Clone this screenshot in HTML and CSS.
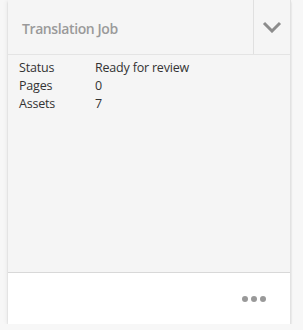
FILE: index.html
```html
<!DOCTYPE html>
<html lang="en">
<head>
  <meta charset="UTF-8">
  <title>Translation Job</title>
  <link rel="stylesheet" href="styles.css">
</head>
<body>
<div class="card">
  <div class="card-head">
    <div class="title">Translation Job</div>
    <div class="toggle">
      <svg width="20" height="12" viewBox="0 0 20 12"><path d="M2 2 L10 10 L18 2" fill="none" stroke="#8c8c8c" stroke-width="3"/></svg>
    </div>
  </div>
  <div class="card-body">
    <div class="row"><span class="label">Status</span><span>Ready for review</span></div>
    <div class="row"><span class="label">Pages</span><span>0</span></div>
    <div class="row"><span class="label">Assets</span><span>7</span></div>
  </div>
  <div class="card-foot">
    <span class="dot"></span><span class="dot"></span><span class="dot"></span>
  </div>
</div>
</body>
</html>
```

FILE: styles.css
```css
html, body {
    margin: 0;
    padding: 0;
    background: #f7f7f7;
    font-family: "Open Sans", "Liberation Sans", sans-serif;
}

.card {
    width: 282px;
    height: 324px;
    margin-left: 8px;
    background: #f5f5f5;
    border-right: 1px solid #e2e2e2;
    box-shadow: 0 2px 2px rgba(0, 0, 0, 0.15), -2px 0 4px rgba(0, 0, 0, 0.04);

    display: flex;
    flex-direction: column;
}

.card-head {
    height: 54px;
    border-bottom: 1px solid #e4e4e4;

    display: flex;
    flex-direction: row;
}

.title {
    flex: 1;
    padding: 19px 0 0 14px;
    font-size: 14px;
    letter-spacing: -0.4px;
    font-weight: 600;
    color: #9a9a9a;
}

.toggle {
    width: 36px;
    border-left: 1px solid #e0e0e0;

    display: flex;
    align-items: center;
    justify-content: center;
}

.card-body {
    flex: 1;
    padding: 4px 0 0 11px;
    font-size: 12.5px;
    letter-spacing: -0.2px;
    color: #333;
}

.row {
    height: 18px;
    line-height: 18px;
    display: flex;
}

.label {
    width: 76px;
}

.card-foot {
    height: 51px;
    background: #fff;
    border-top: 1px solid #d8d8d8;

    display: flex;
    align-items: center;
    justify-content: flex-end;
    gap: 3px;
    padding-right: 24px;
}

.dot {
    width: 6px;
    height: 6px;
    border-radius: 50%;
    background: #999;
}
```
